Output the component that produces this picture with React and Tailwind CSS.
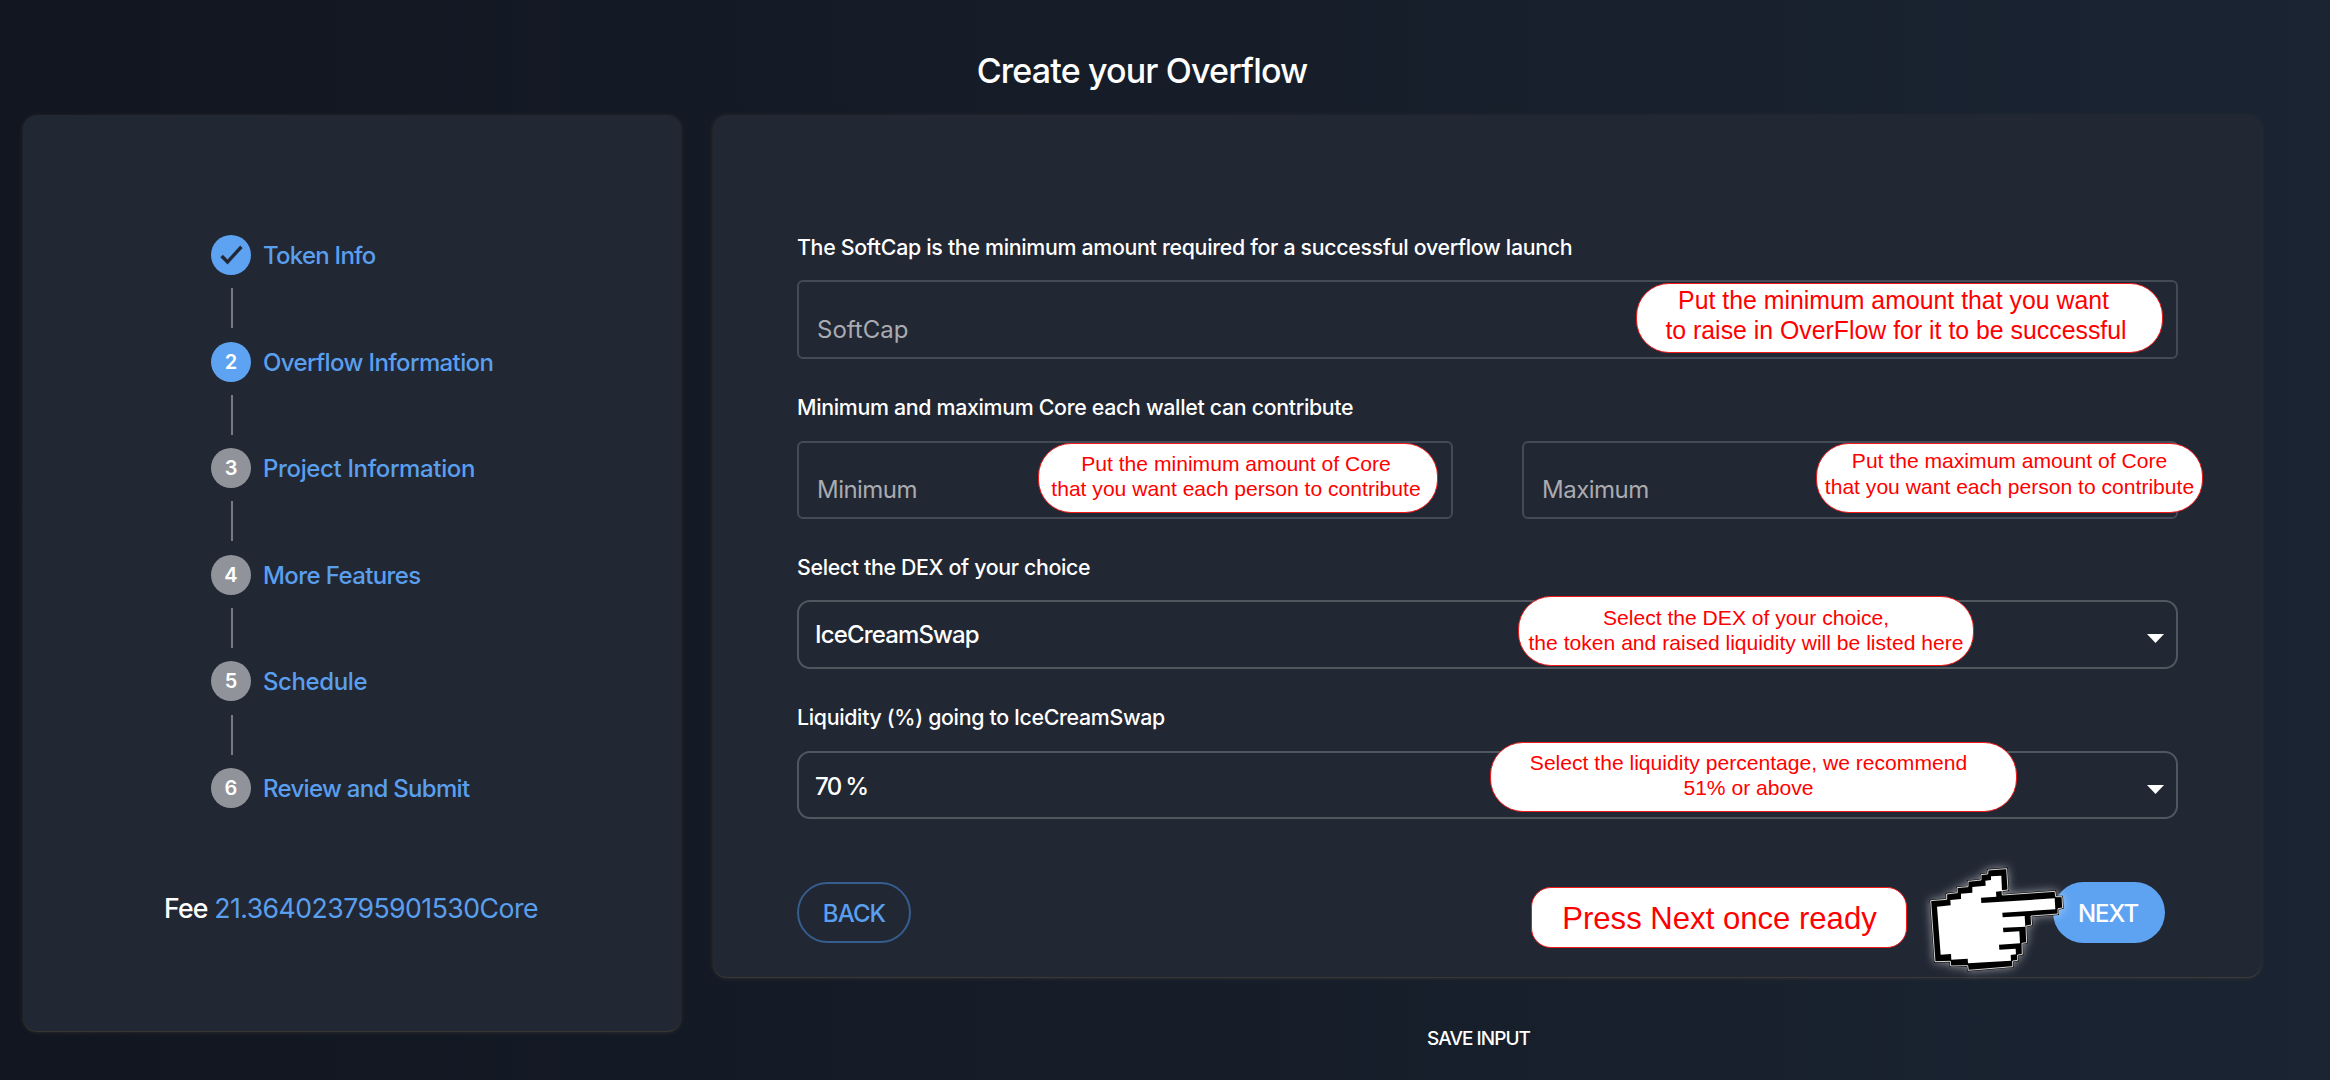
const steps = [
  { label: "Token Info", state: "done", tracking: "tracking-[-0.75px]" },
  { label: "Overflow Information", state: "active", tracking: "tracking-[-0.62px]" },
  { label: "Project Information", state: "todo", tracking: "tracking-[-0.36px]" },
  { label: "More Features", state: "todo", tracking: "tracking-[-0.6px]" },
  { label: "Schedule", state: "todo", tracking: "tracking-[-0.4px]" },
  { label: "Review and Submit", state: "todo", tracking: "tracking-[-0.7px]" },
];

function Card({ className, children }) {
  return (
    <section
      className={`rounded-[14px] bg-[#212733] shadow-[0_1px_1px_rgba(84,78,64,0.5),0_1px_5px_rgba(110,96,66,0.3)] ${className}`}
    >
      {children}
    </section>
  );
}

function Step({ number, label, state, tracking }) {
  return (
    <div className="flex h-10 items-center gap-3">
      <div
        className={`flex size-10 items-center justify-center rounded-full text-xl font-semibold text-white ${
          state === "todo" ? "bg-[#90939a]" : "bg-[#5ea3f1]"
        }`}
      >
        {state === "done" ? (
          <svg viewBox="0 0 24 24" className="size-[27px] fill-[#212733] stroke-[#212733] stroke-[0.3]">
            <path d="M9 16.200 4.800 12l-2 2L9 20.300 22.200 5.800l-2-1.900z" transform="translate(-.5 -.5)" />
          </svg>
        ) : (
          number
        )}
      </div>
      <span className={`pt-[2px] text-2xl font-medium text-[#5a9fee] ${tracking}`}>{label}</span>
    </div>
  );
}

function Label({ className, children }) {
  return (
    <div className={`h-6 whitespace-nowrap text-[21.33px] leading-6 font-medium text-white ${className}`}>{children}</div>
  );
}

function TextField({ placeholder, className, textClass, children }) {
  return (
    <div className={`relative ${className}`}>
      <div className="h-full rounded-[6px] border-2 border-[#444b56] px-[18px] pt-[31px]">
        <span className={`block text-2xl leading-8 text-[#a9abb0] ${textClass}`}>{placeholder}</span>
      </div>
      {children}
    </div>
  );
}

function SelectField({ value, className, textClass, children }) {
  return (
    <div className={`relative ${className}`}>
      <div className="flex h-full items-center justify-between rounded-[13px] border-2 border-[#51575f] pr-[12px] pl-[16px]">
        <span className={`text-2xl leading-8 font-medium text-white ${textClass}`}>{value}</span>
        <svg viewBox="0 0 17 9" className="mt-[8px] h-[9px] w-[17px] fill-white">
          <path d="M0 0h17L8.500 9z" />
        </svg>
      </div>
      {children}
    </div>
  );
}

function Note({ className, children }) {
  return (
    <div
      className={`absolute z-10 border border-[#f01818] bg-white text-center font-['Liberation_Sans',Arial,sans-serif] whitespace-nowrap text-[#ff0000] ${className}`}
    >
      {children}
    </div>
  );
}

function Pointer() {
  const outer =
    "35,122 83,118 83,102 115,98 114,83 147,80 147,64 186,60 186,44 206,42 207,30 263,26 267,90 249,92 250,105 408,94 410,110 429,110 431,144 417,146 417,162 336,168 338,195 321,198 323,248 309,250 310,283 296,285 296,301 281,303 281,320 148,331 146,317 95,318 94,304 48,305";
  const inner =
    "54,140 95,136 94,120 126,117 126,101 160,98 160,81 200,77 199,62 216,60 216,49 247,47 249,93 231,95 232,110 186,113 187,129 407,115 409,148 250,158 251,172 317,168 319,200 252,203 253,217 301,214 303,250 240,254 241,269 290,266 291,283 275,285 276,302 147,310 146,296 97,299 96,282 65,284";
  return (
    <svg
      viewBox="0 0 540 360"
      className="absolute top-[-22px] left-[1122px] z-20 h-[120px] w-[180px] overflow-visible drop-shadow-[0_0_5px_rgba(255,255,255,0.5)]"
    >
      <polygon points={outer} fill="#000" stroke="#000" strokeWidth="6" />
      <polygon points={outer} fill="#000" stroke="#fff" strokeWidth="2.5" />
      <polygon points={inner} fill="#fff" />
    </svg>
  );
}

export default function App() {
  return (
    <main className="h-[1080px] w-full overflow-hidden bg-linear-to-r from-[#111620] via-[#161d29] to-[#1a2432] pr-[69px] pl-[23px] font-['Inter',sans-serif] [font-variant-ligatures:none]">
      <h1 className="h-[115px] pt-[51px] text-center text-[34px] leading-10 font-medium tracking-[-0.85px] text-white">
        Create your Overflow
      </h1>

      <div className="flex items-start gap-8">
        <Card className="h-[916px] w-[658px] shrink-0 pt-[120px]">
          <div className="pl-[188px]">
            {steps.map((s, i) => (
              <div key={s.label}>
                {i > 0 && <div className="my-[13.3px] ml-5 h-10 w-[2px] bg-[#777a80]" />}
                <Step number={i + 1} {...s} />
              </div>
            ))}
          </div>
          <p className="mt-[84px] pr-[2px] text-center text-[26.67px] leading-8 whitespace-nowrap text-[#5a9fee]">
            <span className="mr-[5px] font-medium tracking-[-0.8px] text-white">Fee</span>{" "}
            <span className="-ml-[6px] tracking-[-0.54px]">21.364023795901530Core</span>
          </p>
        </Card>

        <div className="flex-1">
          <Card className="h-[862px] pt-[120px] pr-[83px] pl-[84px]">
            <Label className="tracking-[-0.3px]">
              The SoftCap is the minimum amount required for a successful overflow launch
            </Label>
            <TextField placeholder="SoftCap" className="mt-[21px] h-[79px]" textClass="pt-px">
              <Note className="top-[3px] left-[839px] h-[70px] w-[527px] rounded-[33px] pt-[2px] text-[24.85px] leading-[29.700px]">
                <div className="pr-[12px]">Put the minimum amount that you want</div>
                <div className="pr-[7px]">to raise in OverFlow for it to be successful</div>
              </Note>
            </TextField>

            <Label className="mt-[36px] tracking-[-0.31px]">Minimum and maximum Core each wallet can contribute</Label>
            <div className="mt-[22px] grid h-[78px] grid-cols-[656px_656px] justify-between">
              <TextField placeholder="Minimum" className="h-[78px]" textClass="tracking-[-0.55px]">
                <Note className="top-[2px] left-[241px] h-[70px] w-[400px] rounded-[33px] pt-[6.500px] text-[21.1px] leading-[25.600px]">
                  <div className="pr-[4px]">Put the minimum amount of Core</div>
                  <div className="pr-[4px]">that you want each person to contribute</div>
                </Note>
              </TextField>
              <TextField placeholder="Maximum" className="h-[78px]" textClass="tracking-[-0.5px]">
                <Note className="top-[2px] left-[294px] h-[70px] w-[387px] rounded-[33px] pt-[4px] text-[21.1px] leading-[25.500px]">
                  <div>Put the maximum amount of Core</div>
                  <div>that you want each person to contribute</div>
                </Note>
              </TextField>
            </div>

            <Label className="mt-[36px] tracking-[-0.34px]">Select the DEX of your choice</Label>
            <SelectField value="IceCreamSwap" className="mt-[21px] h-[69px]" textClass="pt-px tracking-[-0.85px]">
              <Note className="top-[-4px] left-[721px] h-[70px] w-[456px] rounded-[33px] pt-[7.500px] text-[21.1px] leading-[25.800px]">
                <div>Select the DEX of your choice,</div>
                <div>the token and raised liquidity will be listed here</div>
              </Note>
            </SelectField>

            <Label className="mt-[36px] tracking-[-0.32px]">Liquidity (%) going to IceCreamSwap</Label>
            <SelectField value="70 %" className="mt-[22px] h-[68px]" textClass="pt-[3px] tracking-[-1.7px]">
              <Note className="top-[-9px] left-[693px] h-[70px] w-[527px] rounded-[33px] pt-[6.500px] text-[21.1px] leading-[25.800px]">
                <div className="pr-[10px]">Select the liquidity percentage, we recommend</div>
                <div className="pr-[10px]">51% or above</div>
              </Note>
            </SelectField>

            <div className="relative mt-[63px] flex h-[61px] justify-between pr-[13px]">
              <button className="w-[114px] rounded-full border-2 border-[#355d8d] pt-[2px] text-2xl font-medium tracking-[-0.9px] text-[#5a9fee]">
                BACK
              </button>
              <Note className="top-[5px] left-[734px] h-[61px] w-[376px] rounded-[20px] pl-px text-[31.1px] leading-[61px]">
                Press Next once ready
              </Note>
              <Pointer />
              <button className="w-[112px] rounded-full bg-[#5ea3f1] pt-[2px] pr-[2px] text-2xl font-medium tracking-[-1px] text-white">
                NEXT
              </button>
            </div>
          </Card>

          <div className="mt-[46px] pr-[17px] text-center">
            <button className="text-[19px] leading-8 font-medium tracking-[-0.95px] text-white">SAVE INPUT</button>
          </div>
        </div>
      </div>
    </main>
  );
}
